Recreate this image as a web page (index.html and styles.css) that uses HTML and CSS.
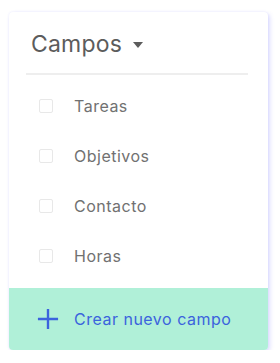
FILE: index.html
```html
<!DOCTYPE html>
<html lang="es">
<head>
  <meta charset="UTF-8" />
  <title>Campos</title>
  <link rel="stylesheet" href="styles.css">
</head>
<body>
  <div class="card">
    <div class="card-header">
      <span class="card-title">Campos</span>
      <svg class="caret" viewBox="0 0 10 6"><path d="M0 0h10L5 6z"/></svg>
    </div>
    <div class="divider"></div>

    <ul class="field-list">
      <li class="field-item"><span class="check"></span>Tareas</li>
      <li class="field-item"><span class="check"></span>Objetivos</li>
      <li class="field-item"><span class="check"></span>Contacto</li>
      <li class="field-item"><span class="check"></span>Horas</li>
    </ul>

    <div class="card-footer">
      <svg class="plus" viewBox="0 0 24 24"><path d="M12 1v22M1 12h22"/></svg>
      <span>Crear nuevo campo</span>
    </div>
  </div>
</body>
</html>
```

FILE: styles.css
```css
body {
  margin: 0;
  background-color: #fff;
  font-family: Inter, "Noto Sans", sans-serif;
}

.card {
  width: 259px;
  height: 338px;
  margin: 12px 0 0 9px;
  background-color: #fff;
  border-radius: 4px;
  box-shadow: 2px 2px 4px rgba(120, 120, 255, 0.25), 0 0 2px rgba(120, 120, 255, 0.15);
  display: flex;
  flex-direction: column;
  overflow: hidden;
}

.card-header {
  display: flex;
  align-items: center;
  height: 61px;
  padding-left: 22px;
  box-sizing: border-box;
  padding-top: 3px;
}
.card-title {
  font-size: 23px;
  letter-spacing: 0.2px;
  color: #5c5c5c;
}
.caret {
  width: 10px;
  height: 6px;
  margin-left: 11px;
  margin-top: 2px;
  fill: #5c5c5c;
}

.divider {
  height: 2px;
  background-color: #eee;
  margin: 0 20px 0 17px;
}

.field-list {
  list-style: none;
  margin: 6px 0 0;
  padding: 0;
  flex: 1;
}
.field-item {
  height: 50px;
  display: flex;
  align-items: center;
  padding-left: 30px;
  font-size: 16px;
  letter-spacing: 0.5px;
  color: #717171;
}
.check {
  width: 12px;
  height: 12px;
  border: 1px solid #e8e8e8;
  border-radius: 2px;
  margin-right: 21px;
}

.card-footer {
  height: 62px;
  background-color: #b0f0d8;
  display: flex;
  align-items: center;
  padding-left: 28px;
  font-size: 16px;
  letter-spacing: 0.5px;
  color: #3b63dd;
}
.plus {
  width: 22px;
  height: 22px;
  margin-right: 15px;
  stroke: #3b63dd;
  stroke-width: 2.6;
  fill: none;
}
```
